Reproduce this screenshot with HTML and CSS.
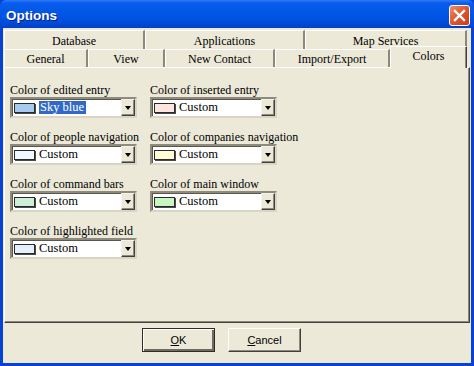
FILE: index.html
```html
<!DOCTYPE html>
<html>
<head>
<meta charset="utf-8">
<title>Options</title>
<link rel="stylesheet" href="styles.css">
</head>
<body>
<div class="window">
  <div class="titlebar">
    <span class="title">Options</span>
    <span class="close">
      <svg width="13" height="13" viewBox="0 0 13 13"><path d="M2 2 L11 11 M11 2 L2 11" stroke="#fff" stroke-width="2.4" stroke-linecap="square"/></svg>
    </span>
  </div>
  <div class="client">
    <div class="tabs">
      <div class="tabrow back">
        <div class="tab w141">Database</div>
        <div class="tab w160">Applications</div>
        <div class="tab w162">Map Services</div>
      </div>
      <div class="tabrow front">
        <div class="tab w84">General</div>
        <div class="tab w77">View</div>
        <div class="tab w110">New Contact</div>
        <div class="tab w115">Import/Export</div>
        <div class="tab w77 selected">Colors</div>
      </div>
    </div>
    <div class="panel">
      <div class="grid">
        <div class="field">
          <div class="label">Color of edited entry</div>
          <div class="combo"><span class="swatch sky"></span><span class="value hl">Sky blue</span><span class="drop"><span class="arrow"></span></span></div>
        </div>
        <div class="field">
          <div class="label">Color of inserted entry</div>
          <div class="combo"><span class="swatch pink"></span><span class="value">Custom</span><span class="drop"><span class="arrow"></span></span></div>
        </div>
        <div class="field">
          <div class="label">Color of people navigation</div>
          <div class="combo"><span class="swatch alice"></span><span class="value">Custom</span><span class="drop"><span class="arrow"></span></span></div>
        </div>
        <div class="field">
          <div class="label">Color of companies navigation</div>
          <div class="combo"><span class="swatch yellow"></span><span class="value">Custom</span><span class="drop"><span class="arrow"></span></span></div>
        </div>
        <div class="field">
          <div class="label">Color of command bars</div>
          <div class="combo"><span class="swatch mint"></span><span class="value">Custom</span><span class="drop"><span class="arrow"></span></span></div>
        </div>
        <div class="field">
          <div class="label">Color of main window</div>
          <div class="combo"><span class="swatch green"></span><span class="value">Custom</span><span class="drop"><span class="arrow"></span></span></div>
        </div>
        <div class="field">
          <div class="label">Color of highlighted field</div>
          <div class="combo"><span class="swatch ice"></span><span class="value">Custom</span><span class="drop"><span class="arrow"></span></span></div>
        </div>
      </div>
    </div>
    <div class="buttons">
      <div class="btn default"><span class="u">O</span>K</div>
      <div class="btn"><span class="u">C</span>ancel</div>
    </div>
  </div>
</div>
</body>
</html>
```

FILE: styles.css
```css
* { box-sizing: border-box; }
html, body { margin: 0; padding: 0; }
body { width: 474px; height: 366px; overflow: hidden; background: #0A46D8; }

.window {
  width: 474px;
  height: 366px;
  display: flex;
  flex-direction: column;
  background: #0842D4;
  padding: 0 3px 3px 3px;
}

.titlebar {
  height: 28px;
  flex: none;
  margin: 0 -3px;
  padding: 0 4px 0 6px;
  display: flex;
  align-items: center;
  justify-content: space-between;
  background: linear-gradient(#2E7BF8 0px, #0A5CEE 3px, #0358E6 10px, #0054E3 17px, #0049D6 24px, #0040C8 28px);
  border-radius: 6px 6px 0 0;
}
.title {
  color: #fff;
  font-family: "Liberation Sans", Arial, sans-serif;
  font-weight: bold;
  font-size: 13.5px;
  text-shadow: 1px 1px 0 #0A1E8C;
  padding-top: 3px;
}
.close {
  width: 21px;
  height: 21px;
  margin-top: 2px;
  border: 1px solid #fff;
  border-radius: 3px;
  background: linear-gradient(135deg, #EC8E6E 0%, #E05A32 45%, #C93A18 100%);
  display: flex;
  align-items: center;
  justify-content: center;
}

.client {
  flex: 1;
  background: #ECE9D8;
  display: flex;
  flex-direction: column;
  padding-top: 2px;
  font-family: "Liberation Serif", "Times New Roman", serif;
  font-size: 12px;
  color: #000;
}

.tabs { margin: 0 1px; }
.tabrow { display: flex; }
.tabrow.back { height: 19px; }
.tabrow.front { height: 18px; align-items: flex-end; }
.tab {
  height: 100%;
  display: flex;
  align-items: center;
  justify-content: center;
  border-top: 1px solid #fff;
  border-left: 1px solid #fff;
  border-right: 2px solid #8C8978;
  background: #ECE9D8;
  padding-top: 2px;
}
.w141 { width: 141px; }
.w160 { width: 160px; }
.w162 { width: 162px; }
.w84 { width: 84px; }
.w77 { width: 77px; }
.w110 { width: 110px; }
.w115 { width: 115px; }

.tab.selected {
  position: relative;
  z-index: 2;
  height: 22px;
  margin-top: -3px;
  margin-bottom: -1px;
  padding-top: 0;
  padding-bottom: 2px;
  border-right: 1px solid #404040;
  box-shadow: inset -1px 0 #8C8978;
}

.panel {
  height: 256px;
  flex: none;
  margin: 0 1px;
  border: 1px solid;
  border-color: #fff #404040 #404040 #fff;
  box-shadow: inset -1px -1px #8C8978;
  padding: 15px 0 0 5px;
}

.grid {
  display: grid;
  grid-template-columns: 127px 127px;
  column-gap: 13px;
  row-gap: 12px;
}
.label {
  height: 14px;
  line-height: 14px;
  white-space: nowrap;
}
.combo {
  height: 21px;
  display: flex;
  align-items: center;
  background: #fff;
  border: 2px solid;
  border-color: #8E8B7C #D8D5C6 #D8D5C6 #8E8B7C;
  box-shadow: inset 1px 1px #5A584E;
  padding-left: 2px;
  font-size: 12.5px;
}
.swatch {
  width: 21px;
  height: 10px;
  border: 1px solid #2A2A2A;
  box-shadow: 1px 1px 0 #4A4A4A;
  margin: 0 4px 0 0;
  flex: none;
}
.sky { background: #A6CAF0; }
.pink { background: #FCE6DE; }
.alice { background: #F2F8FF; }
.yellow { background: #FFFDD6; }
.mint { background: #CFEED8; }
.green { background: #C8F6C0; }
.ice { background: #E6F0FC; }

.value {
  flex: 1;
  line-height: 13px;
  height: 13px;
}
.value.hl {
  flex: none;
  background: #316AC5;
  color: #fff;
  padding: 0 2px 0 1px;
  margin-right: auto;
}
.drop {
  width: 14px;
  height: 17px;
  margin-left: auto;
  background: #ECE9D8;
  border: 1px solid;
  border-color: #F4F2EA #404040 #404040 #F4F2EA;
  box-shadow: inset -1px -1px #8E8B7C;
  display: flex;
  align-items: center;
  justify-content: center;
  flex: none;
}
.arrow {
  width: 0;
  height: 0;
  border-left: 3.5px solid transparent;
  border-right: 3.5px solid transparent;
  border-top: 4px solid #000;
  margin-top: 1px;
}

.buttons {
  display: flex;
  gap: 13px;
  padding: 5px 0 0 139px;
}
.btn {
  width: 73px;
  height: 24px;
  display: flex;
  align-items: center;
  justify-content: center;
  font-family: "Liberation Sans", Arial, sans-serif;
  font-size: 11px;
  background: #ECE9D8;
  border: 1px solid;
  border-color: #fff #404040 #404040 #fff;
  box-shadow: inset -1px -1px #8E8B7C;
}
.btn.default {
  border: 1px solid #2E2C24;
  box-shadow: inset 1px 1px #fff, inset -2px -2px #6E6C60;
}
.u { text-decoration: underline; }
```
